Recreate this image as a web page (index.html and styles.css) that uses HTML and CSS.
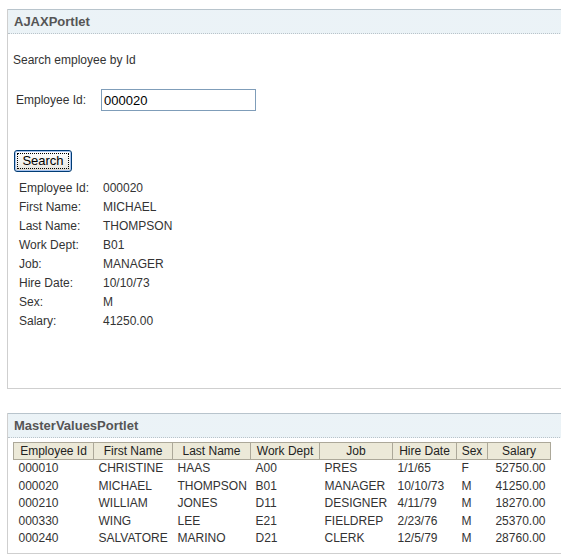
FILE: index.html
```html
<!DOCTYPE html>
<html>
<head>
<meta charset="utf-8">
<link rel="stylesheet" href="styles.css">
</head>
<body>
<div class="portlet first">
  <div class="portlet-title">AJAXPortlet</div>
  <div class="portlet-body">
    <p class="intro">Search employee by Id</p>
    <div class="search-row">
      <label class="search-label">Employee Id:</label>
      <input class="search-input" type="text" value="000020">
    </div>
    <button class="search-btn"><span class="focus">Search</span></button>
    <table class="details">
      <tr><td class="k">Employee Id:</td><td>000020</td></tr>
      <tr><td class="k">First Name:</td><td>MICHAEL</td></tr>
      <tr><td class="k">Last Name:</td><td>THOMPSON</td></tr>
      <tr><td class="k">Work Dept:</td><td>B01</td></tr>
      <tr><td class="k">Job:</td><td>MANAGER</td></tr>
      <tr><td class="k">Hire Date:</td><td>10/10/73</td></tr>
      <tr><td class="k">Sex:</td><td>M</td></tr>
      <tr><td class="k">Salary:</td><td>41250.00</td></tr>
    </table>
  </div>
</div>
<div class="portlet second">
  <div class="portlet-title">MasterValuesPortlet</div>
  <div class="portlet-body">
    <table class="grid">
      <thead>
        <tr><th class="c1">Employee Id</th><th class="c2">First Name</th><th class="c3">Last Name</th><th class="c4">Work Dept</th><th class="c5">Job</th><th class="c6">Hire Date</th><th class="c7">Sex</th><th class="c8">Salary</th></tr>
      </thead>
      <tbody>
        <tr><td>000010</td><td>CHRISTINE</td><td>HAAS</td><td>A00</td><td>PRES</td><td>1/1/65</td><td>F</td><td class="num">52750.00</td></tr>
        <tr><td>000020</td><td>MICHAEL</td><td>THOMPSON</td><td>B01</td><td>MANAGER</td><td>10/10/73</td><td>M</td><td class="num">41250.00</td></tr>
        <tr><td>000210</td><td>WILLIAM</td><td>JONES</td><td>D11</td><td>DESIGNER</td><td>4/11/79</td><td>M</td><td class="num">18270.00</td></tr>
        <tr><td>000330</td><td>WING</td><td>LEE</td><td>E21</td><td>FIELDREP</td><td>2/23/76</td><td>M</td><td class="num">25370.00</td></tr>
        <tr><td>000240</td><td>SALVATORE</td><td>MARINO</td><td>D21</td><td>CLERK</td><td>12/5/79</td><td>M</td><td class="num">28760.00</td></tr>
      </tbody>
    </table>
  </div>
</div>
</body>
</html>
```
FILE: styles.css
```css
html, body {
  margin: 0;
  padding: 0;
  background: #fff;
  overflow: hidden;
}
body {
  font-family: "Liberation Sans", Arial, sans-serif;
  font-size: 12px;
  color: #333;
  padding: 9px 0 0 7px;
  width: 580px;
}
.portlet {
  border: 1px solid #cfcfcf;
  border-top: none;
  background: #fff;
}
.portlet-title {
  height: 23px;
  border-top: 1px solid #b8c4cc;
  padding: 0 0 0 6px;
  font-size: 13px;
  font-weight: bold;
  color: #555;
  line-height: 24px;
  background-color: #fff;
  background-image:
    radial-gradient(circle, #d3e4ec 0.6px, transparent 0.8px);
  background-size: 2px 2px;
  border-bottom: 1px dotted #b9c3c9;
}
.first .portlet-body {
  height: 354px;
  padding: 0 0 0 5px;
}
.intro {
  margin: 0;
  padding-top: 19px;
  line-height: 15px;
}
.search-row {
  display: flex;
  align-items: center;
  margin-top: 21px;
  padding-left: 3px;
}
.search-label {
  width: 85px;
}
.search-input {
  width: 149px;
  height: 16px;
  padding: 2px 2px;
  border: 1px solid #7f9db9;
  font-family: "Liberation Sans", Arial, sans-serif;
  font-size: 13px;
  color: #000;
  margin: 0;
}
.search-btn {
  margin: 39px 0 0 1px;
  display: block;
  width: 58px;
  height: 22px;
  padding: 2px;
  border: 1px solid #003c74;
  border-radius: 3px;
  background: linear-gradient(#fff, #ecebe6 80%, #d6d0c5);
  box-shadow: inset 0 0 0 1px #a8c4f0;
  font-family: "Liberation Sans", Arial, sans-serif;
  font-size: 13px;
  color: #000;
}
.search-btn .focus {
  display: block;
  border: 1px dotted #000;
  line-height: 14px;
}
.details {
  border-collapse: collapse;
  margin: 7px 0 0 4px;
}
.details td {
  padding: 0 2px;
  height: 19px;
  line-height: 19px;
}
.details td.k {
  width: 80px;
}
.second {
  margin-top: 24px;
}
.second .portlet-body {
  padding: 4px 0 5px 5px;
}
.grid {
  border-collapse: collapse;
  width: 538px;
}
.grid th {
  background: #ece9d8;
  border: 1px solid #aca899;
  font-weight: normal;
  color: #222;
  height: 16px;
  line-height: 16px;
  padding: 0;
  text-align: center;
}
.grid td {
  padding: 0 0 0 5px;
  height: 17.5px;
  line-height: 17px;
  white-space: nowrap;
}
.grid td.num {
  text-align: right;
  padding-right: 5px;
}
.c1 { width: 79px; }
.c2 { width: 78px; }
.c3 { width: 77px; }
.c4 { width: 68px; }
.c5 { width: 72px; }
.c6 { width: 63px; }
.c7 { width: 30px; }
.c8 { width: 62px; }
```
